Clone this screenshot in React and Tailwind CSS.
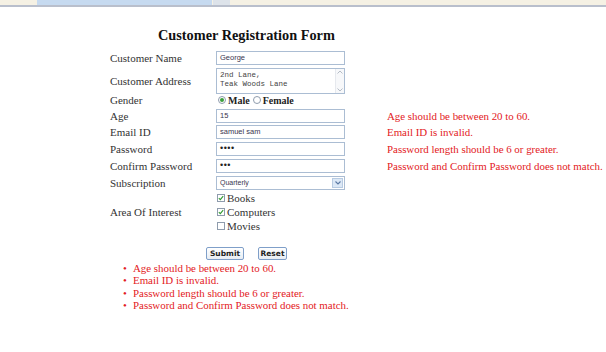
import React from 'react';

const serif = { fontFamily: '"Liberation Serif", "Times New Roman", serif' };

const rows = [
  { label: 'Age', value: '15', error: 'Age should be between 20 to 60.' },
  { label: 'Email ID', value: 'samuel sam', error: 'Email ID is invalid.' },
  { label: 'Password', value: '••••', error: 'Password length should be 6 or greater.', dots: true },
  { label: 'Confirm Password', value: '•••', error: 'Password and Confirm Password does not match.', dots: true },
];

const errors = [
  'Age should be between 20 to 60.',
  'Email ID is invalid.',
  'Password length should be 6 or greater.',
  'Password and Confirm Password does not match.',
];

const Box = ({ children, className = '' }) => (
  <div className={`w-[129px] border border-[#abbdd3] bg-white flex items-center px-[3px] font-['Liberation_Sans',Arial,sans-serif] text-[7.5px] text-[#3a3550] ${className}`}>
    {children}
  </div>
);

const Check = ({ checked, label }) => (
  <div className="flex items-center gap-[2px]">
    <span className="w-[8px] h-[8px] border border-[#8f9cad] bg-white flex items-center justify-center">
      {checked && (
        <svg width="6" height="6" viewBox="0 0 6 6">
          <path d="M0.8 3.2 L2.3 4.6 L5.2 1.2" fill="none" stroke="#2f9a2f" strokeWidth="1.1" />
        </svg>
      )}
    </span>
    <span className="text-[11px] text-[#333]">{label}</span>
  </div>
);

const Radio = ({ checked, label }) => (
  <div className="flex items-center gap-[2px]">
    <span className="w-[8px] h-[8px] rounded-full border border-[#8f9cad] bg-white flex items-center justify-center">
      {checked && <span className="w-[4px] h-[4px] rounded-full bg-[#3ca03c]" />}
    </span>
    <span className="text-[10px] font-bold text-[#222]">{label}</span>
  </div>
);

export default function App() {
  return (
    <div className="w-[606px] h-[352px] bg-white overflow-hidden" style={serif}>
      {/* browser chrome strip */}
      <div className="h-[5px] bg-[#f5f1e4] flex">
        <div className="ml-[37px] w-[175px] bg-[#c6daf0]" />
        <div className="ml-[1px] w-[17px] bg-[#dde3ea]" />
      </div>
      <div className="h-[2px] bg-[#b9bfcc]" />

      <div className="pt-[19px] pl-[158px] h-[44px]">
        <h1 className="text-[14.3px] font-bold leading-[18px] text-[#111]">Customer Registration Form</h1>
      </div>

      <div className="pl-[110px] text-[11px] text-[#333]">
        <div className="flex items-center h-[14px]">
          <div className="w-[106px]">Customer Name</div>
          <Box className="h-[14px]">George</Box>
        </div>

        <div className="flex items-center h-[26px] mt-[3px]">
          <div className="w-[106px]">Customer Address</div>
          <div className="w-[129px] h-[26px] border border-[#abbdd3] bg-white flex">
            <div className="flex-1 pl-[3px] pt-[2px] font-['Liberation_Mono','Courier_New',monospace] text-[7.5px] leading-[9px] text-[#444]">
              <div>2nd Lane,</div>
              <div>Teak Woods Lane</div>
            </div>
            <div className="w-[9px] flex flex-col justify-between items-center py-[1px] bg-[#f7f8fa] border-l border-[#e6e9ee]">
              <svg width="6" height="4" viewBox="0 0 6 4"><path d="M0.5 3.5 L3 1 L5.5 3.5" fill="none" stroke="#b5bcc6" strokeWidth="1" /></svg>
              <svg width="6" height="4" viewBox="0 0 6 4"><path d="M0.5 0.5 L3 3 L5.5 0.5" fill="none" stroke="#b5bcc6" strokeWidth="1" /></svg>
            </div>
          </div>
        </div>

        <div className="flex items-center h-[12px]">
          <div className="w-[106px]">Gender</div>
          <div className="flex items-center gap-[3px] pl-[2px]">
            <Radio checked label="Male" />
            <Radio label="Female" />
          </div>
        </div>

        {rows.map((r, i) => (
          <div key={r.label} className={`flex items-center h-[14px] ${i === 0 ? 'mt-[3px]' : i === 1 ? 'mt-[2px]' : 'mt-[3px]'}`}>
            <div className="w-[106px]">{r.label}</div>
            <Box className="h-[14px]">
              {r.dots ? <span className="text-[9px] tracking-[0.5px] text-[#222]">{r.value}</span> : r.value}
            </Box>
            <div className="ml-[42px] text-[10.9px] text-[#e3201d]">{r.error}</div>
          </div>
        ))}

        <div className="flex items-center h-[14px] mt-[3px]">
          <div className="w-[106px]">Subscription</div>
          <div className="w-[129px] h-[14px] border border-[#abbdd3] bg-white flex items-center pl-[3px] font-['Liberation_Sans',Arial,sans-serif] text-[7px] text-[#3a3550]">
            <span className="flex-1">Quarterly</span>
            <span className="w-[11px] h-[10px] mr-[1px] bg-[#dce8f6] border border-[#b8cbe2] flex items-center justify-center">
              <svg width="6" height="4" viewBox="0 0 6 4"><path d="M0.5 0.5 L3 3 L5.5 0.5" fill="none" stroke="#5b79a4" strokeWidth="1.1" /></svg>
            </span>
          </div>
        </div>

        <div className="flex items-center h-[14px] mt-[1px]">
          <div className="w-[106px]" />
          <div className="pl-[1px]"><Check checked label="Books" /></div>
        </div>
        <div className="flex items-center h-[14px]">
          <div className="w-[106px]">Area Of Interest</div>
          <div className="pl-[1px]"><Check checked label="Computers" /></div>
        </div>
        <div className="flex items-center h-[14px]">
          <div className="w-[106px]" />
          <div className="pl-[1px]"><Check label="Movies" /></div>
        </div>

        <div className="flex mt-[14px] pl-[96px] gap-[14px]">
          <button className="w-[38px] h-[13px] border border-[#7f9fc9] rounded-[2px] bg-gradient-to-b from-white to-[#e8edf3] font-['DejaVu_Sans',Tahoma,sans-serif] text-[7.5px] font-bold text-[#222] leading-none">
            Submit
          </button>
          <button className="w-[29px] h-[13px] border border-[#7f9fc9] rounded-[2px] bg-gradient-to-b from-white to-[#e8edf3] font-['DejaVu_Sans',Tahoma,sans-serif] text-[7.5px] font-bold text-[#222] leading-none">
            Reset
          </button>
        </div>

        <div className="mt-[2px] pl-[13px] text-[10.9px] text-[#e3201d]">
          {errors.map((e) => (
            <div key={e} className="flex items-center h-[12.4px] leading-[12.4px]">
              <span className="w-[10px] text-[11px]">•</span>
              <span>{e}</span>
            </div>
          ))}
        </div>
      </div>
    </div>
  );
}
